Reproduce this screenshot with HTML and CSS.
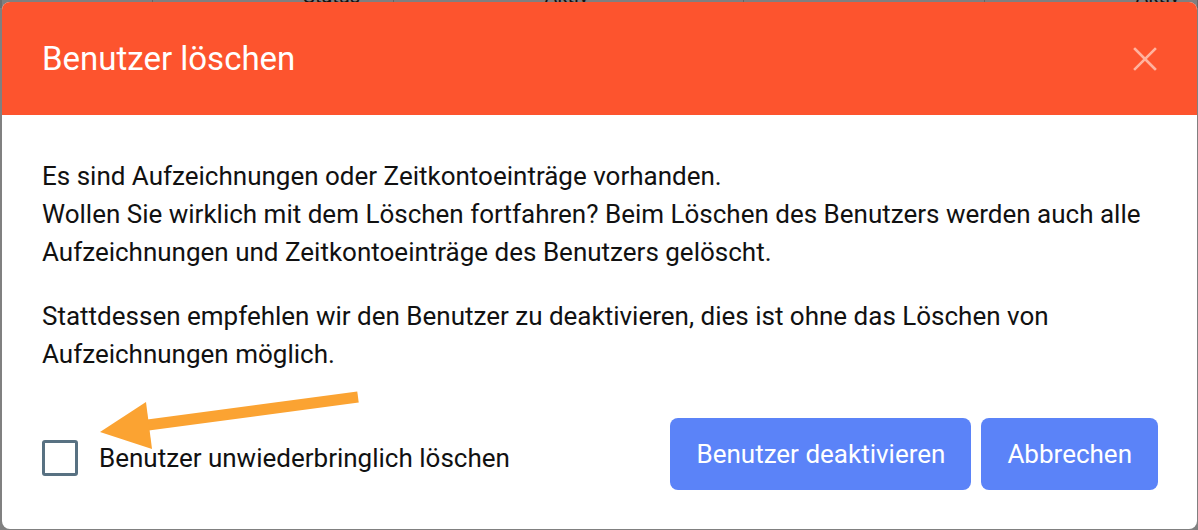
FILE: index.html
```html
<!DOCTYPE html>
<html lang="de">
<head>
  <meta charset="UTF-8" />
  <meta name="viewport" content="width=device-width, initial-scale=1.0" />
  <title>Benutzer löschen</title>
  <link rel="stylesheet" href="styles.css">
</head>
<body>
  <div class="backdrop">
    <div class="bg-row">
      <div class="bg-cell" style="width: 130px"></div>
      <div class="bg-cell" style="width: 262px">Status</div>
      <div class="bg-cell" style="width: 395px">Aktiv</div>
      <div class="bg-cell" style="width: 262px"></div>
      <div class="bg-cell">Aktiv bis</div>
    </div>
  </div>

  <div class="dialog">
    <div class="dialog-header">
      <h2>Benutzer löschen</h2>
      <button class="close" aria-label="Schließen">
        <svg width="24" height="24" viewBox="0 0 24 24">
          <path d="M2 2 L22 22 M22 2 L2 22" stroke="currentColor" stroke-width="2.6" stroke-linecap="square" fill="none"/>
        </svg>
      </button>
    </div>

    <div class="dialog-body">
      <p>Es sind Aufzeichnungen oder Zeitkontoeinträge vorhanden.<br>
      Wollen Sie wirklich mit dem Löschen fortfahren? Beim Löschen des Benutzers werden auch alle Aufzeichnungen und Zeitkontoeinträge des Benutzers gelöscht.</p>
      <p>Stattdessen empfehlen wir den Benutzer zu deaktivieren, dies ist ohne das Löschen von Aufzeichnungen möglich.</p>
    </div>

    <div class="dialog-footer">
      <label class="check">
        <span class="box"></span>
        Benutzer unwiederbringlich löschen
      </label>
      <div class="actions">
        <button class="btn">Benutzer deaktivieren</button>
        <button class="btn">Abbrechen</button>
      </div>
    </div>

    <!-- annotation arrow drawn on top of the dialog -->
    <svg class="arrow" width="280" height="70" viewBox="0 0 280 70">
      <line x1="258" y1="7" x2="48" y2="35" stroke="#fba332" stroke-width="11" />
      <polygon points="0,42 46,12 52,59" fill="#fba332" />
    </svg>
  </div>
</body>
</html>
```

FILE: styles.css
```css
body { margin: 0; font-family: Roboto, "Liberation Sans", sans-serif; background: #808080; width: 1198px; height: 530px; overflow: hidden; position: relative; }
.backdrop { height: 530px; }
.bg-row { display: flex; margin-top: -16px; height: 24px; border-left: 2px solid #6e6e6e; }
.bg-cell { border-right: 1px solid #666; font-size: 20px; color: #111; padding-left: 150px; box-sizing: border-box; line-height: 24px; }

.dialog { position: absolute; left: 2px; top: 2px; width: 1195px; height: 527px; background: #fff; border-radius: 8px; overflow: hidden; display: flex; flex-direction: column; }
.dialog-header { background: #fd542e; height: 113px; flex-shrink: 0; display: flex; align-items: center; justify-content: space-between; padding: 0 40px 0 40px; box-sizing: border-box; }
.dialog-header h2 { margin: 0; color: #fff; font-weight: 400; font-size: 33px; }
.close { background: none; border: 0; padding: 0; color: #ffb29e; width: 24px; height: 24px; display: flex; }

.dialog-body { padding: 42px 40px 0 40px; font-size: 26px; line-height: 38px; color: #111; }
.dialog-body p { margin: 0 0 26px 0; }
.dialog-body p:last-child { margin-bottom: 0; }

.dialog-footer { display: flex; align-items: center; justify-content: space-between; padding: 0 39px 0 40px; margin-top: 45px; }
.check { display: flex; align-items: center; gap: 21px; font-size: 26px; color: #111; margin-top: 7px; }
.box { width: 30px; height: 30px; border: 3px solid #587182; border-radius: 3px; }
.actions { display: flex; gap: 10px; }
.btn { background: #5b83f8; color: #fff; border: 0; border-radius: 8px; height: 72px; padding: 0 26px; font-family: inherit; font-size: 26px; }

.arrow { position: absolute; left: 98px; top: 388px; }
```
